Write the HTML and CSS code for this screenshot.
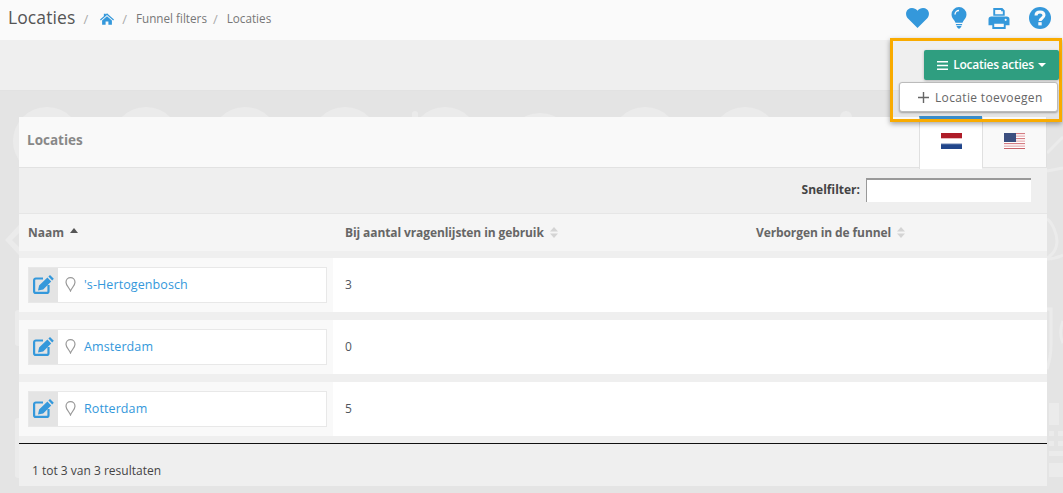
FILE: index.html
```html
<!DOCTYPE html>
<html lang="nl">
<head>
<meta charset="utf-8">
<title>Locaties</title>
<link rel="stylesheet" href="styles.css">
</head>
<body>
<header class="topbar">
  <nav class="crumbs">
    <span class="page-title">Locaties</span>
    <span class="sep first">/</span>
    <svg class="home" viewBox="0 0 16 13"><path fill="#3498db" d="M8 0 6.600 1.300V.6H4.400v2.700L0 7.200l.9 1L8 2l7.100 6.200.9-1L13 4.500ZM2.400 8.200V13h4V9.300h3.200V13h4V8.200L8 3.400Z"/></svg>
    <span class="sep second">/</span><span class="crumb">Funnel filters</span>
    <span class="sep tight">/</span><span class="crumb">Locaties</span>
  </nav>
  <div class="tools">
    <svg class="tool heart" viewBox="0 0 24 21"><path fill="#3498db" d="M12 21 2 11C-.8 8-.6 3.600 2 1.500 5-.8 9.500-.3 12 3c2.500-3.300 7-3.800 10-1.500 2.600 2.100 2.800 6.500 0 9.500Z"/></svg>
    <svg class="tool bulb" viewBox="0 0 18 25"><path fill="#3498db" d="M9 0a8.500 8.500 0 0 0-8.500 8.500c0 3 1.500 4.700 2.800 6.300.9 1.100 1.400 2.100 1.700 3.200h8c.3-1.100.8-2.100 1.700-3.200 1.300-1.600 2.800-3.300 2.800-6.300A8.500 8.500 0 0 0 9 0Z"/><path fill="#fafafa" d="M9 3.200a5.300 5.300 0 0 0-5.300 5.300h1.600A3.700 3.700 0 0 1 9 4.800Z"/><path fill="#3498db" d="M5.500 19.200h7v1.500h-7Zm.5 2.300h6L10.500 24a2 2 0 0 1-3 0Z"/></svg>
    <svg class="tool print" viewBox="0 0 22 22"><path fill="#3498db" d="M5 0h9.500L17 2.500V8H5Zm2 2v4.500h8V3.500h-1.800V2ZM3 9h16a3 3 0 0 1 3 3v6h-4v4H4v-4H0v-6a3 3 0 0 1 3-3Zm3 7.500V20h10v-3.500Zm12-5.200a1.100 1.100 0 1 0 0 2.200 1.100 1.100 0 0 0 0-2.200Z"/></svg>
    <svg class="tool help" viewBox="0 0 22 22"><circle cx="11" cy="11" r="11" fill="#3498db"/><path fill="none" stroke="#fafafa" stroke-width="3" d="M7 8.500C7 6 8.800 5 11 5s4 1.200 4 3.300c0 2.900-4 2.800-4 5.700"/><rect x="9.300" y="15.200" width="3.400" height="3.200" fill="#fafafa"/></svg>
  </div>
</header>
<div class="subbar"></div>
<main class="content">
  <svg class="watermark" viewBox="0 0 1063 402" aria-hidden="true">
    <g fill="#ebebeb">
      <circle cx="47" cy="50" r="34"/><circle cx="146" cy="50" r="34"/><circle cx="245" cy="50" r="34"/><circle cx="345" cy="50" r="34"/><circle cx="445" cy="50" r="34"/><circle cx="540" cy="56" r="34"/><circle cx="645" cy="50" r="34"/><circle cx="745" cy="50" r="34"/>
      <rect x="412" y="20" width="6" height="20" rx="3"/>
      <rect x="840" y="20" width="12" height="20" rx="6"/>
      <path d="M19 134 5 149l14 15v-8l-7-7 7-7Z"/>
      <rect x="15" y="219" width="8" height="36" rx="3"/>
      <rect x="15" y="327" width="8" height="60" rx="3"/>
      <rect x="1049" y="312" width="10" height="22"/>
      <rect x="1049" y="340" width="5" height="5"/><rect x="1058" y="340" width="5" height="5"/>
      <rect x="1049" y="350" width="5" height="5"/><rect x="1058" y="350" width="5" height="5"/>
      <rect x="1049" y="360" width="14" height="5"/><rect x="1049" y="372" width="14" height="14"/>
    </g>
    <g fill="none" stroke="#ebebeb" stroke-width="3">
      <path d="M1047 62l16-16M1047 80l16-3"/>
      <path d="M1047 128c6 4 10 16 10 22 0 8-5 14-10 17"/>
      <path d="M1047 168c6 0 12-2 16-4"/>
      <path d="M1047 218h4v36c0 8-2 18-4 24"/>
      <path d="M1063 230c-3 8-3 16 0 22"/>
    </g>
  </svg>
  <section class="panel">
    <div class="panel-head">
      <h2 class="panel-title">Locaties</h2>
      <div class="tabs">
        <div class="tab active">
          <svg class="flag" viewBox="0 0 21 16"><rect width="21" height="5.300" fill="#ae1c28"/><rect y="5.300" width="21" height="5.400" fill="#fff"/><rect y="10.700" width="21" height="5.300" fill="#21468b"/><rect y="5" width="21" height="1" fill="#e9b9bc"/><rect y="10.200" width="21" height="1" fill="#b4c0d8"/></svg>
        </div>
        <div class="tab">
          <svg class="flag" viewBox="0 0 21 16"><rect width="21" height="16" fill="#fff"/><path fill="#e8b0b4" d="M0 0h21v1.200H0zM0 2.500h21v1.200H0zM0 5h21v1.200H0zM0 7.500h21v1.200H0zM0 10h21v1.200H0zM0 12.500h21v1.200H0zM0 15h21v1H0z"/><path fill="#bf4a52" d="M12 0h9v.6h-9zM12 5h9v.6h-9zM0 10h21v.6H0zM0 15.300h21v.7H0z"/><rect width="12" height="9" fill="#3c4f7f"/></svg>
        </div>
      </div>
    </div>
    <div class="filter-row">
      <label class="filter-label" for="snel">Snelfilter:</label>
      <input class="filter-input" id="snel" type="text">
    </div>
    <div class="grid-row table-head">
      <div class="th">Naam <svg class="sort up" viewBox="0 0 8 5"><path fill="#555" d="M4 0l4 5H0z"/></svg></div>
      <div class="th">Bij aantal vragenlijsten in gebruik <svg class="sort" viewBox="0 0 8 11"><path fill="#d4d4d4" d="M4 0l4 4.500H0zM4 11 0 6.500h8z"/></svg></div>
      <div class="th">Verborgen in de funnel <svg class="sort" viewBox="0 0 8 11"><path fill="#d4d4d4" d="M4 0l4 4.500H0zM4 11 0 6.500h8z"/></svg></div>
    </div>
    <div class="grid-row row">
      <div class="name-cell"><div class="name-box">
        <span class="edit"><svg viewBox="0 0 21 19"><path fill="none" stroke="#3498db" stroke-width="2.200" d="M10 3.500H2.800A1.700 1.700 0 0 0 1.100 5.200v11a1.700 1.700 0 0 0 1.700 1.700h11a1.700 1.700 0 0 0 1.700-1.700V10"/><path fill="#3498db" d="M17 0l3.800 3.800-1.600 1.600-3.800-3.800ZM14.400 2.600l3.800 3.800-8 8L5 15.500l1.100-5Z"/></svg></span>
        <svg class="pin" viewBox="0 0 11 15"><path fill="none" stroke="#999" stroke-width="1.200" d="M5.500 14C4 10.500 1 8.200 1 5.200a4.500 4.500 0 0 1 9 0c0 3-3 5.300-4.500 8.800Z"/></svg>
        <a class="name-link">'s-Hertogenbosch</a>
      </div></div>
      <div class="td">3</div><div class="td"></div>
    </div>
    <div class="grid-row row">
      <div class="name-cell"><div class="name-box">
        <span class="edit"><svg viewBox="0 0 21 19"><path fill="none" stroke="#3498db" stroke-width="2.200" d="M10 3.500H2.800A1.700 1.700 0 0 0 1.100 5.200v11a1.700 1.700 0 0 0 1.700 1.700h11a1.700 1.700 0 0 0 1.700-1.700V10"/><path fill="#3498db" d="M17 0l3.800 3.800-1.600 1.600-3.800-3.800ZM14.400 2.600l3.800 3.800-8 8L5 15.500l1.100-5Z"/></svg></span>
        <svg class="pin" viewBox="0 0 11 15"><path fill="none" stroke="#999" stroke-width="1.200" d="M5.500 14C4 10.500 1 8.200 1 5.200a4.500 4.500 0 0 1 9 0c0 3-3 5.300-4.500 8.800Z"/></svg>
        <a class="name-link">Amsterdam</a>
      </div></div>
      <div class="td">0</div><div class="td"></div>
    </div>
    <div class="grid-row row">
      <div class="name-cell"><div class="name-box">
        <span class="edit"><svg viewBox="0 0 21 19"><path fill="none" stroke="#3498db" stroke-width="2.200" d="M10 3.500H2.800A1.700 1.700 0 0 0 1.100 5.200v11a1.700 1.700 0 0 0 1.700 1.700h11a1.700 1.700 0 0 0 1.700-1.700V10"/><path fill="#3498db" d="M17 0l3.800 3.800-1.600 1.600-3.800-3.800ZM14.400 2.600l3.800 3.800-8 8L5 15.500l1.100-5Z"/></svg></span>
        <svg class="pin" viewBox="0 0 11 15"><path fill="none" stroke="#999" stroke-width="1.200" d="M5.500 14C4 10.500 1 8.200 1 5.200a4.500 4.500 0 0 1 9 0c0 3-3 5.300-4.500 8.800Z"/></svg>
        <a class="name-link">Rotterdam</a>
      </div></div>
      <div class="td">5</div><div class="td"></div>
    </div>
    <div class="panel-foot">1 tot 3 van 3 resultaten</div>
  </section>
</main>
<div class="actions-highlight">
  <button class="actions-btn" type="button">
    <svg class="bars" viewBox="0 0 11 9"><path fill="#fff" d="M0 0h11v1.500H0zM0 3.700h11v1.500H0zM0 7.500h11V9H0z"/></svg>
    <span class="btn-label">Locaties acties</span>
    <svg class="caret" viewBox="0 0 8 4"><path fill="#fff" d="M0 0h8L4 4z"/></svg>
  </button>
  <div class="actions-menu">
    <svg class="plus" viewBox="0 0 11 11"><path fill="#666" d="M4.800 0h1.400v4.800H11v1.400H6.200V11H4.800V6.200H0V4.800h4.800z"/></svg>
    Locatie toevoegen
  </div>
</div>
</body>
</html>
```
FILE: styles.css
```css
* { box-sizing: border-box; }
html, body { margin: 0; height: 493px; overflow: hidden; }
body {
  font-family: "Open Sans", "Noto Sans", sans-serif;
  font-size: 12px;
  color: #555;
  background-color: #e4e4e4;
  position: relative;
}
.topbar {
  height: 40px;
  background: #fafafa;
  display: flex;
  align-items: center;
  justify-content: space-between;
  padding: 0 12px 6px 8px;
}
.crumbs { display: flex; align-items: center; }
.page-title { font-size: 17.500px; color: #555; letter-spacing: .1px; }
.sep { color: #aaa; font-size: 13px; margin: 3px 8px 0 7px; }
.sep.first { margin: 3px 12px 0 8px; }
.sep.second { margin: 3px 9px 0 8px; }
.sep.tight { margin: 3px 9px 0 6px; }
.crumb { font-size: 11.700px; color: #777; margin-top: 2px; }
.home { width: 14px; height: 12px; margin-top: 3px; }
.tools { display: flex; align-items: center; margin-top: 2px; }
.tool { display: block; }
.heart { width: 23px; height: 20px; margin-right: 22px; }
.bulb { width: 16px; height: 22px; margin-right: 21px; }
.print { width: 22px; height: 21px; margin-right: 19px; }
.help { width: 22px; height: 22px; }
.subbar {
  height: 51px;
  background: #efefef;
  border-bottom: 1px solid #e2e2e2;
}
.content {
  position: relative;
  height: 402px;
  padding: 26px 16px 7px 19px;
}
.watermark {
  position: absolute;
  left: 0;
  top: 0;
  width: 1063px;
  height: 402px;
}
.panel { position: relative; height: 369px; background: #efefef; display: flex; flex-direction: column; }
.panel-head {
  height: 51px;
  flex: none;
  background: #f9f9f9;
  border-bottom: 1px solid #e2e2e2;
  display: flex;
  justify-content: space-between;
}
.panel-title { margin: 14px 0 0 8px; font-size: 13.500px; line-height: 18px; font-weight: 700; color: #888; }
.tabs { display: flex; }
.tab {
  width: 63px;
  display: flex;
  justify-content: center;
  padding-top: 16px;
  border-left: 1px solid #e0e0e0;
  background: #f9f9f9;
}
.tab:last-child { border-right: 1px solid #e0e0e0; width: 65px; }
.tab.active {
  background: #fff;
  height: 53px;
  margin-top: -1px;
  padding-top: 13px;
  border-top: 4px solid #3a8cc9;
}
.flag { width: 21px; height: 16px; display: block; }
.filter-row {
  height: 46px;
  flex: none;
  display: flex;
  align-items: center;
  justify-content: flex-end;
  padding: 0 16px 2px 0;
  border-bottom: 1px solid #e6e6e6;
}
.filter-label { font-weight: 700; font-size: 12px; color: #444; margin-right: 6px; }
.filter-input {
  width: 165px;
  height: 24px;
  background: #fff;
  border: 1px solid #999;
  border-top-width: 2px;
  border-bottom: 0;
  border-right: 0;
  padding: 0;
}
.grid-row { display: grid; grid-template-columns: 314px 411px 1fr; }
.table-head { height: 37px; flex: none; background: #f5f5f5; align-items: center; }
.th {
  font-weight: 700;
  font-size: 12px;
  color: #666;
  padding-left: 12px;
  display: flex;
  align-items: center;
  gap: 6px;
  margin-top: -1px;
  letter-spacing: -.1px;
  white-space: nowrap;
}
.th:first-child { padding-left: 9px; letter-spacing: 0; }
.th:nth-child(3) { padding-left: 12px; }
.sort { width: 8px; height: 11px; }
.sort.up { height: 5px; margin-top: -4px; }
.row { height: 54px; flex: none; margin-top: 8px; background: #fff; align-items: stretch; }
.table-head + .row { margin-top: 7px; }
.name-cell { background: #f9f9f9; padding: 9px 6px 0 9px; }
.name-box {
  height: 36px;
  background: #fff;
  border: 1px solid #e8e8e8;
  display: flex;
  align-items: center;
}
.edit { width: 29px; height: 34px; background: #e4e4e4; display: flex; align-items: center; justify-content: center; padding-bottom: 2px; }
.edit svg { width: 21px; height: 19px; }
.pin { width: 11px; height: 15px; margin-left: 7px; margin-right: 8px; margin-bottom: 1px; }
.name-link { color: #3498db; font-size: 12.500px; letter-spacing: .1px; margin-bottom: 2px; }
.td { padding: 18px 0 0 12px; font-size: 12px; line-height: 18px; color: #50565e; }
.panel-foot {
  margin-top: 7px;
  border-top: 1px solid #111;
  padding: 18px 0 0 13px;
  font-size: 12px;
  line-height: 18px;
  color: #444;
  flex: 1;
}
.actions-highlight {
  position: absolute;
  left: 890px;
  top: 38px;
  width: 172px;
  height: 84px;
  border: 3px solid #f9ab00;
  box-shadow: 0 2px 5px rgba(0,0,0,.35);
  padding: 9px 0 0 9px;
}
.actions-btn {
  display: flex;
  align-items: center;
  justify-content: center;
  margin-left: 22px;
  width: 135px;
  height: 30px;
  background: #2f9e80;
  border: 0;
  border-radius: 2px;
  color: #fff;
  font: 600 12px "Open Sans", sans-serif;
  padding: 0;
  letter-spacing: -.25px;
  box-shadow: 0 1px 3px rgba(0,0,0,.25);
}
.btn-label { margin-bottom: 2px; }
.bars { width: 11px; height: 9px; margin-right: 5px; }
.caret { width: 8px; height: 4px; margin-left: 4px; }
.actions-menu {
  margin-top: 2px;
  margin-left: -3px;
  width: 159px;
  height: 30px;
  background: #fff;
  border: 1px solid #bbb;
  border-radius: 3px;
  box-shadow: 0 1px 2px rgba(0,0,0,.3);
  display: flex;
  align-items: center;
  padding-left: 18px;
  font-size: 12px;
  color: #666;
  letter-spacing: .34px;
}
.plus { width: 11px; height: 11px; margin-right: 6px; }
```
